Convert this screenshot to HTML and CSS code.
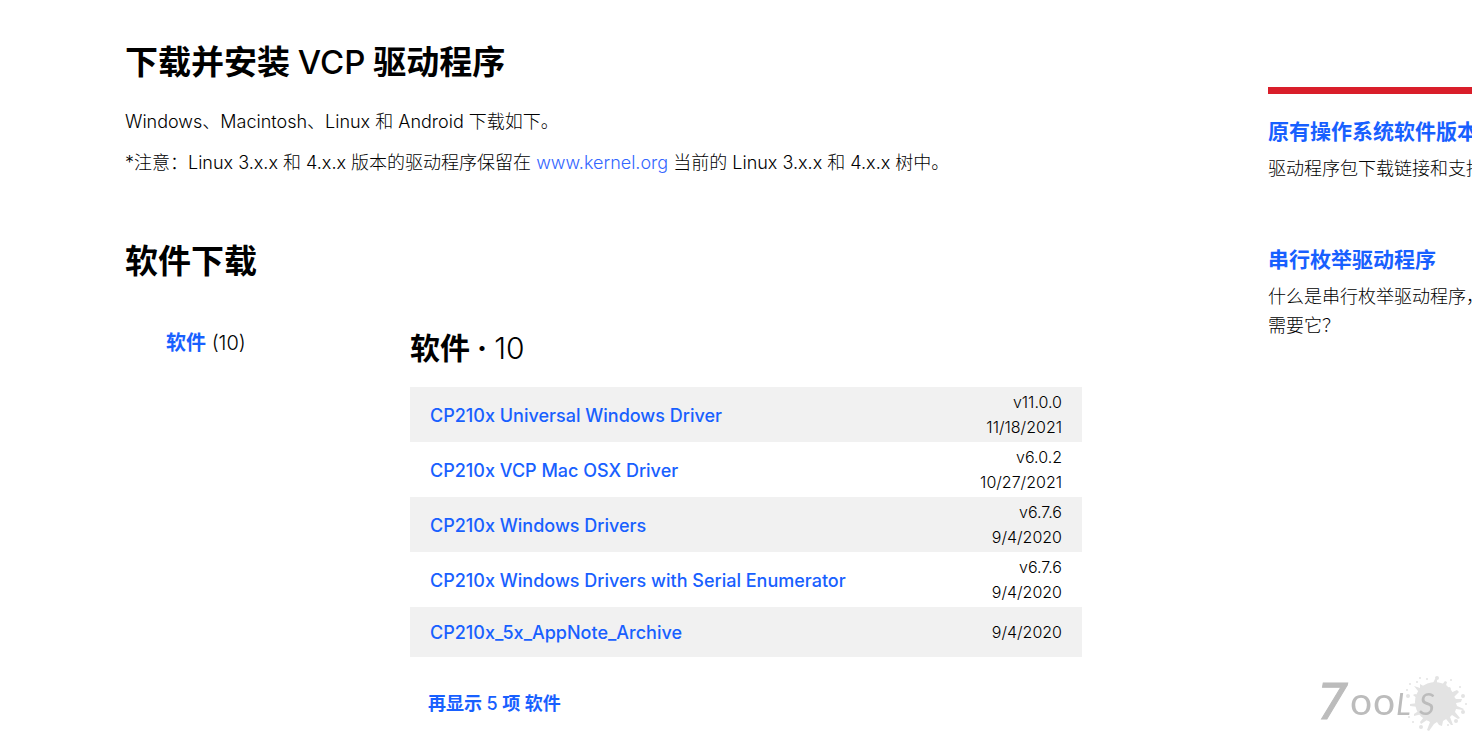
FILE: index.html
```html
<!DOCTYPE html>
<html lang="zh-CN">
<head>
<meta charset="utf-8">
<title>VCP 驱动程序</title>
<link rel="stylesheet" href="styles.css">
</head>
<body>
<div class="page">
  <main class="main">
    <h1 class="title">下载并安装 <span class="latin">VCP</span> 驱动程序</h1>
    <p class="text">Windows、Macintosh、Linux 和 Android 下载如下。</p>
    <p class="text">*注意：Linux 3.x.x 和 4.x.x 版本的驱动程序保留在 <a class="text-link" href="#kernel">www.kernel.org</a> 当前的 Linux 3.x.x 和 4.x.x 树中。</p>
    <h2 class="title downloads-title">软件下载</h2>
    <div class="downloads">
      <nav class="filter"><a class="link" href="#software">软件</a> (10)</nav>
      <section class="software" id="software">
        <h3 class="software-title">软件 · <span class="count">10</span></h3>
        <table class="files">
          <tbody>
            <tr><td><a class="link latin" href="#f1">CP210x Universal Windows Driver</a></td><td class="meta">v11.0.0<br>11/18/2021</td></tr>
            <tr><td><a class="link latin" href="#f2">CP210x VCP Mac OSX Driver</a></td><td class="meta">v6.0.2<br>10/27/2021</td></tr>
            <tr><td><a class="link latin" href="#f3">CP210x Windows Drivers</a></td><td class="meta">v6.7.6<br>9/4/2020</td></tr>
            <tr><td><a class="link latin" href="#f4">CP210x Windows Drivers with Serial Enumerator</a></td><td class="meta">v6.7.6<br>9/4/2020</td></tr>
            <tr><td><a class="link latin" href="#f5">CP210x_5x_AppNote_Archive</a></td><td class="meta">9/4/2020</td></tr>
          </tbody>
        </table>
        <button class="more" type="button">再显示 <span class="latin">5</span> 项 软件</button>
      </section>
    </div>
  </main>
  <aside class="aside">
    <section class="card">
      <h4 class="card-title"><a class="link" href="#legacy">原有操作系统软件版本</a></h4>
      <p class="card-text">驱动程序包下载链接和支持</p>
    </section>
    <section class="card">
      <h4 class="card-title"><a class="link" href="#enum">串行枚举驱动程序</a></h4>
      <p class="card-text">什么是串行枚举驱动程序，需要它？</p>
    </section>
  </aside>
</div>
<svg class="watermark" width="156" height="60" viewBox="0 0 156 60" role="img" aria-label="7ools">
  <g fill="#e3e3e3">
    <circle cx="119" cy="30" r="20"/>
    <path d="M98 14l6 2 0-4 5 3 4-3 3 1 3-6 2 0 0 6 4 1 4-5 2 1-2 7 5-2 1 2-3 5 9-4 2 2-5 5 2 2 6 0-1 3-5 1 1 3 7 3-1 1-7-1-1 3 5 6-2 1-6-4-2 2 3 8-2 0-5-6-3 2-1 5-3-1-2-3-3 2-5 7-2-1 3-8-3-2-6 4-1-2 4-5-2-3-8 2 0-2 6-4-1-3-9-1 0-2 8-1 1-3-6-5 2-1 7 2z"/>
    <circle cx="91" cy="18" r="1"/><circle cx="94" cy="12" r="1"/><circle cx="104" cy="6" r="1"/>
    <circle cx="111" cy="7" r="1"/><circle cx="121" cy="6" r="2"/><circle cx="135" cy="8" r="1"/>
    <circle cx="144" cy="15" r="1"/><circle cx="147" cy="24" r="2"/><circle cx="150" cy="32" r="1"/>
    <circle cx="147" cy="40" r="2"/><circle cx="140" cy="49" r="2"/><circle cx="132" cy="53" r="1"/>
    <circle cx="105" cy="55" r="2"/><circle cx="97" cy="50" r="1"/><circle cx="93" cy="45" r="1"/>
    <circle cx="92" cy="24" r="2"/><circle cx="101" cy="10" r="1"/>
  </g>
  <text class="mark mark-seven" x="1" y="47">7</text>
  <text class="mark mark-o" x="34 57" y="43">oo</text>
  <text class="mark mark-l" x="80 103" y="43">LS</text>
</svg>
</body>
</html>
```
FILE: styles.css
```css
* { box-sizing: border-box; }

body {
  margin: 0;
  overflow-x: hidden;
  background: #fff;
  color: #000;
  font-family: Inter, "Noto Sans CJK SC", sans-serif;
  font-size: 18px;
  font-weight: 300;
  line-height: 29px;
}

h1, h2, h3, h4, p { margin: 0; }

.link, .text-link { color: #1860ff; text-decoration: none; }
.link { font-weight: 600; }
.latin { font-weight: 500; }
.text-link { color: #3366ff; }

.page {
  display: flex;
  gap: 186px;
  padding: 38px 0 16px 125px;
}

.main { flex: 1; min-width: 0; }

.title { font-size: 33px; font-weight: 700; line-height: 48px; }
.title .latin { font-weight: 500; }
.title + .text { margin-top: 21px; }
.text + .text { margin-top: 12px; }
.downloads-title { margin-top: 60px; }

.downloads { display: flex; margin-top: 42px; }
.filter { flex: 0 0 285px; padding: 2px 0 0 41px; font-size: 20px; }
.software { flex: 1; min-width: 0; }
.software-title { font-size: 30px; font-weight: 700; line-height: 43px; }
.count { font-weight: 300; }

.files { width: 100%; margin-top: 17px; border-collapse: collapse; }
.files tr { height: 50px; }
.files tr:nth-child(odd) { background: #f1f1f1; }
.files td { padding: 3px 20px 2px; }
.files .meta { font-size: 16px; font-weight: 300; line-height: 25px; text-align: right; }

.more {
  display: block;
  margin: 32px 0 0 18px;
  padding: 0;
  border: 0;
  background: none;
  color: #1860ff;
  font: inherit;
  font-weight: 600;
}

.aside {
  flex: 0 0 220px;
  margin: 49px -16px 0 0;
  padding-top: 23px;
  border-top: 7px solid #d91e2a;
}
.card + .card { margin-top: 62px; }
.card-title { font-size: 21px; line-height: 30px; }
.card-text { margin-top: 7px; }

.watermark { position: fixed; right: 0; bottom: 4px; }
.mark { fill: #bcbcbc; }
.mark-seven { font: oblique 400 49px "DejaVu Sans", sans-serif; stroke: #bcbcbc; stroke-width: 1px; }
.mark-o { font: 400 39px Lato, sans-serif; }
.mark-l { font: italic 400 31px Lato, sans-serif; }
```
